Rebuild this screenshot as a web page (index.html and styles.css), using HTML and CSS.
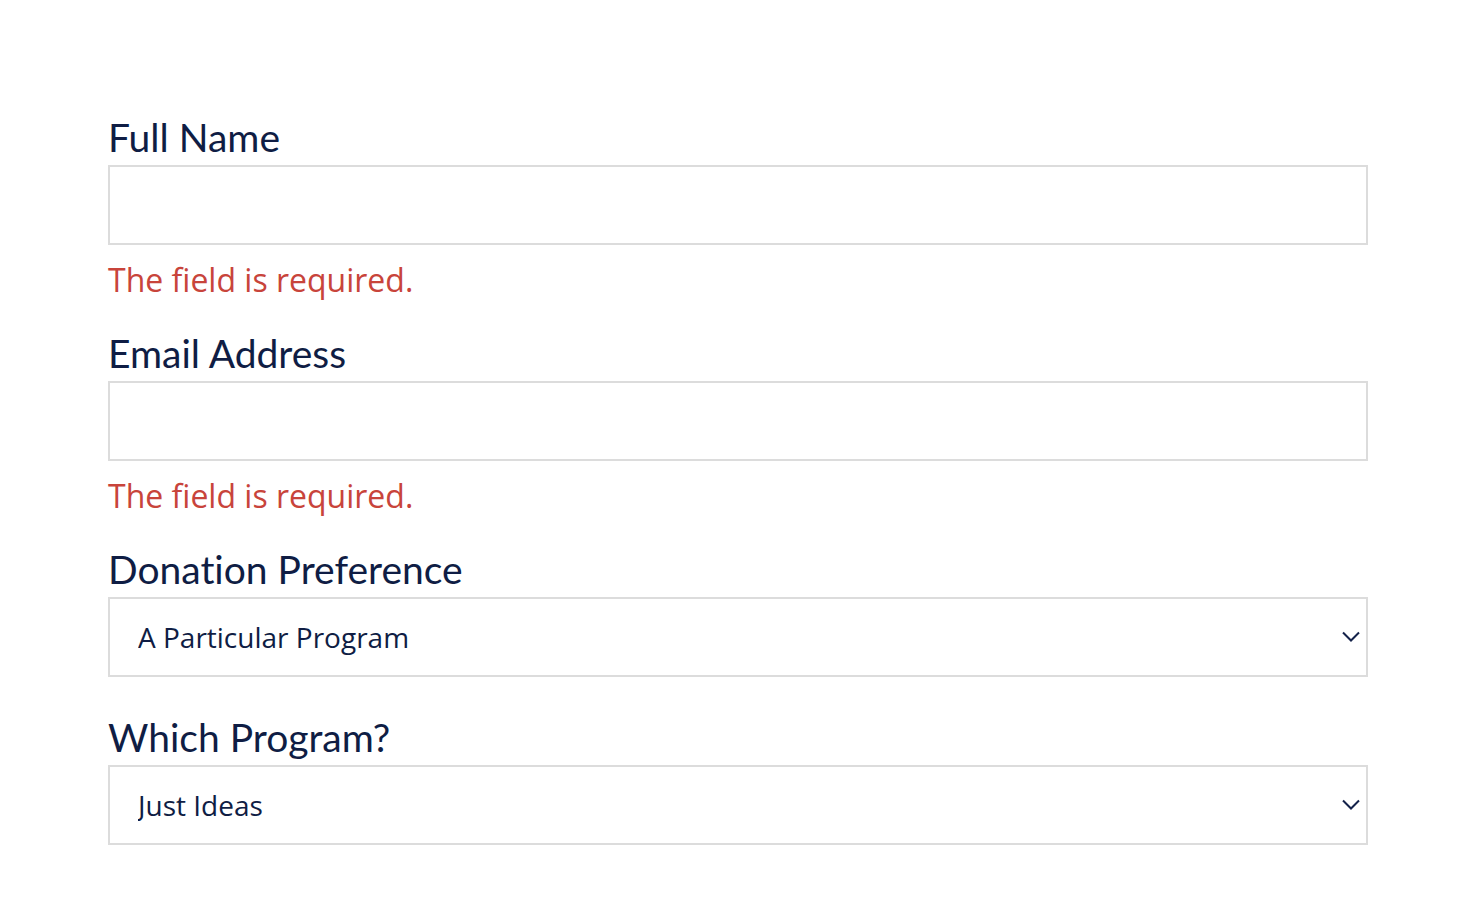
FILE: index.html
```html
<!DOCTYPE html>
<html lang="en">
<head>
    <meta charset="UTF-8">
    <meta name="viewport" content="width=device-width, initial-scale=1.0">
    <title>Donation Form</title>
    <link rel="stylesheet" href="styles.css">
</head>
<body>
    <form class="donation-form">
        <div class="form-field">
            <label for="full-name">Full Name</label>
            <input type="text" id="full-name">
            <p class="field-error">The field is required.</p>
        </div>
        <div class="form-field">
            <label for="email">Email Address</label>
            <input type="text" id="email">
            <p class="field-error">The field is required.</p>
        </div>
        <div class="form-field">
            <label for="preference">Donation Preference</label>
            <div class="select-wrap">
                <select id="preference">
                    <option>A Particular Program</option>
                    <option>Where Needed Most</option>
                </select>
                <svg class="chevron" width="18" height="11" viewBox="0 0 18 11"><path d="M1 1.5 L9 9.5 L17 1.5" fill="none" stroke="#14224a" stroke-width="2"/></svg>
            </div>
        </div>
        <div class="form-field">
            <label for="program">Which Program?</label>
            <div class="select-wrap">
                <select id="program">
                    <option>Just Ideas</option>
                </select>
                <svg class="chevron" width="18" height="11" viewBox="0 0 18 11"><path d="M1 1.5 L9 9.5 L17 1.5" fill="none" stroke="#14224a" stroke-width="2"/></svg>
            </div>
        </div>
    </form>
</body>
</html>
```

FILE: styles.css
```css
body {
    margin: 0;
    background-color: #ffffff;
    font-family: "Open Sans", sans-serif;
    color: #0f1d44;
}
.donation-form {
    width: 1260px;
    padding: 109px 0 0 108px;
}
label {
    display: block;
    font-family: "Lato", "Liberation Sans", sans-serif;
    font-size: 39px;
    line-height: 56px;
    font-variant-ligatures: none;
    color: #0f1d44;
}
input[type="text"],
select {
    display: block;
    width: 100%;
    height: 80px;
    box-sizing: border-box;
    margin: 0;
    border: 2px solid #dcdcdc;
    border-radius: 0;
    background: #ffffff;
    font-family: "Open Sans", sans-serif;
    font-size: 28px;
    color: #0f1d44;
}
.field-error {
    margin: 11px 0 21px;
    font-size: 32px;
    line-height: 48px;
    color: #c8443b;
}
.select-wrap {
    position: relative;
    margin-bottom: 32px;
}
.form-field:last-child .select-wrap {
    margin-bottom: 0;
}
select {
    appearance: none;
    -webkit-appearance: none;
    padding: 0 60px 0 28px;
}
.chevron {
    position: absolute;
    right: 8px;
    top: 34px;
    pointer-events: none;
}
```
